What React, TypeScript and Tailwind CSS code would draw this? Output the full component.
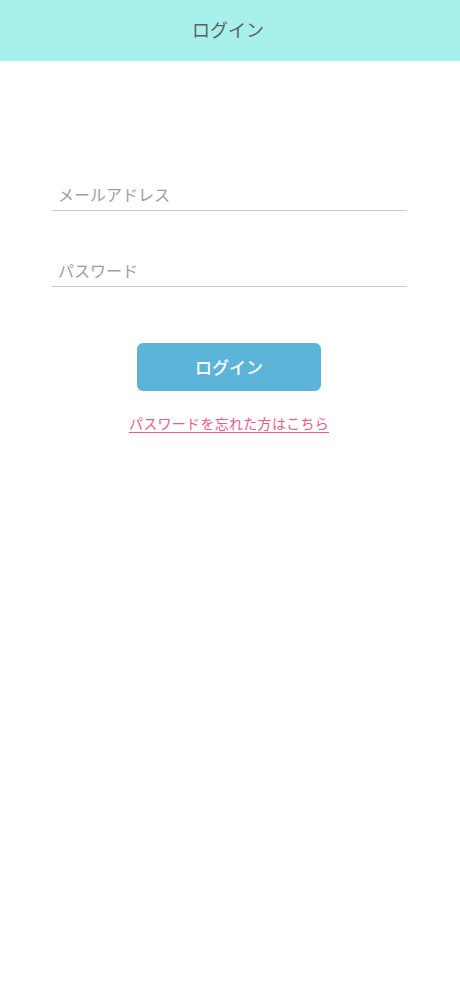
export default function App() {
  return (
    <div
      className="min-h-screen bg-white"
      style={{ fontFamily: '"Noto Sans CJK JP", "Noto Sans", sans-serif' }}
    >
      <header className="h-[61px] bg-[#a8f0ec] flex items-center justify-center pb-[3px] pr-[4px]">
        <h1 className="text-[18px] font-normal text-[#5f5f5f]">ログイン</h1>
      </header>

      <main className="px-[52px] pt-[119px] w-[460px]">
        <form className="flex flex-col">
          <input
            type="email"
            placeholder="メールアドレス"
            className="w-[355px] h-[31px] pl-[6px] pb-[3px] border-b border-[#c8c8c8] text-[16px] text-[#333] placeholder:text-[#9e9e9e] outline-none"
          />
          <input
            type="password"
            placeholder="パスワード"
            className="mt-[45px] w-[355px] h-[31px] pl-[6px] pb-[3px] border-b border-[#c8c8c8] text-[16px] text-[#333] placeholder:text-[#9e9e9e] outline-none"
          />

          <div className="flex flex-col items-center mt-[56px] pr-[2px]">
            <button
              type="button"
              className="w-[184px] h-[48px] rounded-[6px] bg-[#5db4d9] text-white text-[17px] font-medium"
            >
              ログイン
            </button>
            <a
              href="#"
              className="mt-[22px] text-[14px] text-[#ee5a8c] underline underline-offset-[3px] tracking-[0.3px]"
            >
              パスワードを忘れた方はこちら
            </a>
          </div>
        </form>
      </main>
    </div>
  );
}
